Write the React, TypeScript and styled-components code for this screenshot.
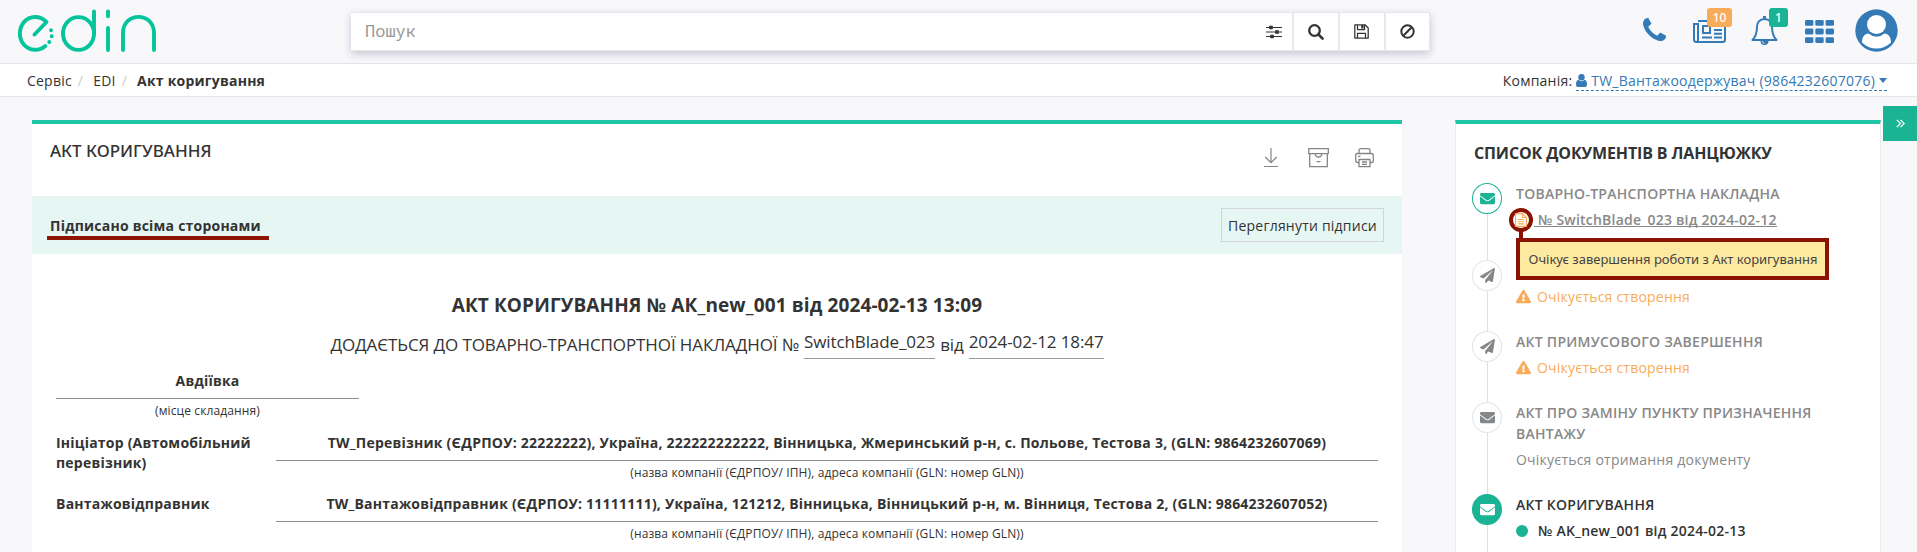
import React from 'react';
import styled, { createGlobalStyle, css } from 'styled-components';
import { FaExclamationTriangle, FaPaperPlane, FaEnvelope } from 'react-icons/fa';

const GlobalStyle = createGlobalStyle`
  * { box-sizing: border-box; }
  body {
    margin: 0;
    background: #f8f8fb;
    color: #333;
    font: 14px/20px "Open Sans", sans-serif;
    letter-spacing: 0.22px;
    overflow: hidden;
  }
  svg { display: block; flex: none; }
`;

const Page = styled.div`
  height: 552px;
  overflow: hidden;
`;

const Header = styled.header`
  height: 64px;
  display: flex;
  align-items: flex-start;
  border-bottom: 1px solid #e4e5e8;
`;

const Logo = styled.svg`
  margin: 8px 0 0 16px;
`;

const SearchBar = styled.div`
  display: flex;
  width: 1079px;
  height: 39px;
  margin: 12px 0 0 191px;
  background: #fff;
  border: 1px solid #e7e8ec;
  border-left-width: 0;
  box-shadow: 0 3px 8px rgba(50, 60, 90, 0.25);
`;

const SearchInput = styled.div`
  flex: 1;
  padding-left: 14px;
  color: #999;
  font: 17px/35px "Noto Sans Mono", "DejaVu Sans Mono", monospace;
  letter-spacing: 0;
`;

const SearchButton = styled.div<{ $width: number }>`
  width: ${(p) => p.$width}px;
  display: flex;
  align-items: center;
  justify-content: center;
  & + & { border-left: 2px solid #e7e8ec; }
`;

const HeaderIcons = styled.div`
  display: flex;
  margin-left: 213px;
  color: #337ab7;
`;

const IconSlot = styled.div<{ $left?: number; $top: number }>`
  position: relative;
  margin: ${(p) => p.$top}px 0 0 ${(p) => p.$left ?? 0}px;
`;

const Badge = styled.span<{ $color: string; $x: number; $y: number; $w: number }>`
  position: absolute;
  left: ${(p) => p.$x}px;
  top: ${(p) => p.$y}px;
  width: ${(p) => p.$w}px;
  height: 19px;
  border-radius: 3px;
  background: ${(p) => p.$color};
  color: #fff;
  font: 500 12px/19px "Noto Sans", sans-serif;
  letter-spacing: 0;
  text-align: center;
`;

const Crumbs = styled.nav`
  height: 33px;
  display: flex;
  justify-content: space-between;
  padding: 7px 30px 0 27px;
  background: #fff;
  border-bottom: 1px solid #e4e5e8;
`;

const Trail = styled.div`
  display: flex;
`;

const Slash = styled.span`
  color: #ccc;
  margin: 0 10px 0 6px;
`;

const Company = styled.div`
  display: flex;
  gap: 4px;
`;

const CompanyLink = styled.span`
  display: flex;
  height: 20px;
  gap: 4px;
  align-items: center;
  color: #337ab7;
  border-bottom: 1px dashed #337ab7;
`;

const Caret = styled.i`
  border: 4px solid transparent;
  border-top: 5px solid #337ab7;
  border-bottom: 0;
`;

const Main = styled.main`
  display: flex;
  align-items: flex-start;
  padding-left: 32px;
`;

const Card = styled.section`
  width: 1370px;
  height: 440px;
  margin-top: 23px;
  background: #fff;
  border-top: 4px solid #1fc5a5;
`;

const CardHead = styled.div`
  height: 72px;
  display: flex;
  justify-content: space-between;
  padding: 17px 28px 0 18px;
`;

const CardTitle = styled.h1`
  margin: 0;
  font: 500 17px/20px "Noto Sans", sans-serif;
  letter-spacing: 0;
`;

const Tools = styled.div`
  display: flex;
  gap: 26px;
  padding-top: 7px;
`;

const SignBand = styled.div`
  height: 58px;
  display: flex;
  justify-content: space-between;
  align-items: flex-start;
  background: #e6f6f3;
  padding: 12px 18px 0 15px;
`;

const Signed = styled.strong`
  width: 222px;
  height: 32px;
  padding: 8px 0 0 3px;
  border-bottom: 4px solid #8f1402;
`;

const OutlineButton = styled.div`
  width: 163px;
  height: 34px;
  border: 1px solid #d2d5d6;
  text-align: center;
  line-height: 34px;
  white-space: nowrap;
`;

const DocTitle = styled.h2`
  margin: 39px 0 0;
  font-size: 19px;
  line-height: 24px;
  font-weight: 700;
  letter-spacing: 0.12px;
  text-align: center;
`;

const DocSub = styled.div`
  display: flex;
  justify-content: center;
  gap: 5px;
  margin-top: 12px;
  height: 30px;
  font-size: 17px;
  line-height: 32px;
  letter-spacing: -0.1px;
`;

const Underlined = styled.span`
  height: 30px;
  line-height: 26px;
  border-bottom: 1px solid #999;
`;

const Field = styled.div`
  border-bottom: 1px solid #8d8d8d;
  height: 28px;
  text-align: center;
  font-weight: 700;
  white-space: nowrap;
`;

const Hint = styled.div`
  padding-top: 2px;
  font-size: 12px;
  letter-spacing: 0.12px;
  text-align: center;
`;

const Place = styled.div`
  width: 303px;
  margin: 12px 0 0 24px;
`;

const Party = styled.div<{ $top: number }>`
  display: flex;
  margin: ${(p) => p.$top}px 24px 0;
  height: 50px;
`;

const PartyName = styled.strong`
  width: 220px;
`;

const PartyData = styled.div`
  flex: 1;
`;

const Chain = styled.aside`
  width: 426px;
  height: 440px;
  margin: 23px 2px 0 53px;
  background: #fff;
  border: 1px solid #e7eaec;
  border-top: 4px solid #1fc5a5;
  padding: 18px 0 0 17px;
`;

const ChainTitle = styled.h3`
  margin: 0 0 29px 1px;
  font-size: 16px;
  line-height: 22px;
  font-weight: 700;
  letter-spacing: -0.13px;
`;

const Step = styled.div<{ $height: number }>`
  position: relative;
  display: flex;
  height: ${(p) => p.$height}px;
`;

const Rail = styled.div`
  width: 30px;
  margin: -10px 14px 0 -1px;
  display: flex;
  flex-direction: column;
  align-items: center;
  &::after {
    content: '';
    flex: 1;
    width: 1px;
    background: #e0e0e0;
  }
`;

const Dot = styled.div<{ $kind: 'grey' | 'green' | 'solid' }>`
  width: 30px;
  height: 31px;
  border-radius: 50%;
  display: flex;
  align-items: center;
  justify-content: center;
  border: 1px solid ${(p) => (p.$kind === 'grey' ? '#e3e4e5' : '#1ab394')};
  background: ${(p) => (p.$kind === 'solid' ? '#1ab394' : '#fff')};
  color: ${(p) => (p.$kind === 'grey' ? '#84888b' : p.$kind === 'solid' ? '#fff' : '#1ab394')};
`;

const StepBody = styled.div<{ $dark?: boolean }>`
  width: 330px;
  margin-top: -10px;
  line-height: 21px;
  color: ${(p) => (p.$dark ? '#333' : '#888')};
`;

const StepTitle = styled.div`
  font-weight: 600;
  min-height: 21px;
  letter-spacing: 0.26px;
`;

const StepNote = styled.div<{ $tone?: 'warn' | 'bold' }>`
  display: flex;
  align-items: center;
  gap: 6px;
  margin-top: 5px;
  font-weight: ${(p) => (p.$tone === 'bold' ? 600 : 400)};
  ${(p) => p.$tone === 'warn' && css`color: #f8ac59;`}
`;

const DocLink = styled.span`
  margin-left: 18px;
  padding-left: 4px;
  height: 18px;
  line-height: 21px;
  margin-bottom: 3px;
  border-bottom: 1px solid #888;
  white-space: nowrap;
`;

const GreenDot = styled.i`
  width: 12px;
  height: 12px;
  margin-right: 4px;
  border-radius: 50%;
  background: #1ab394;
`;

const Ring = styled.div`
  position: absolute;
  left: 36px;
  top: 15px;
  width: 24px;
  height: 24px;
  border-radius: 50%;
  border: 4px solid #8b1200;
  display: flex;
  align-items: center;
  justify-content: center;
  color: #f8ac59;
  &::after {
    content: '';
    position: absolute;
    left: 6px;
    top: 18px;
    width: 4px;
    height: 10px;
    background: #8b1200;
  }
`;

const Tip = styled.div`
  position: absolute;
  z-index: 2;
  left: 43px;
  top: 45px;
  width: 313px;
  height: 42px;
  padding-left: 1px;
  border: 4px solid #8b1200;
  background: #fde9a0;
  color: #444;
  font: 13px/35px "Noto Sans", sans-serif;
  letter-spacing: 0;
  text-align: center;
  white-space: nowrap;
`;

const Toggle = styled.div`
  width: 34px;
  height: 35px;
  margin-top: 9px;
  background: #1ab394;
  display: flex;
  align-items: center;
  justify-content: center;
`;

const LogoMark = () => (
  <Logo width="144" height="48" viewBox="16 8 144 48" fill="none" stroke="#05c49b" strokeWidth="3.9" strokeLinecap="round" strokeLinejoin="round">
    <path d="M34.5 34.5 46.5 22C40 15 29.500 15.500 24 22C18.500 29 18.500 38.500 24 44.800C29.500 51 39 51.500 45.300 46" />
    <ellipse cx="78.500" cy="33.500" rx="15.500" ry="16.400" />
    <path d="M94 11.500V34M108 11.500V16.300M108 28V50M123 50V33C123 11.500 154 11.500 154 33V50" />
    <path d="M51 30.300h.01M51.700 36.300h.01M49.300 42h.01" />
  </Logo>
);

const SlidersIcon = () => (
  <svg width="16" height="14" viewBox="0 0 16 14" stroke="#333" fill="#333">
    <path d="M0 2.500h16M0 7h16M0 11.500h16" strokeWidth="1.200" />
    <path d="M3.500 1h3v3h-3zM9.500 5.500h3v3h-3zM4.500 10h3v3h-3z" strokeWidth=".6" />
  </svg>
);

const SearchIcon = () => (
  <svg width="16" height="16" viewBox="0 0 16 16" fill="none" stroke="#333">
    <circle cx="6.500" cy="6.500" r="5.300" strokeWidth="2.300" />
    <path d="M10.500 10.500 14.600 14.600" strokeWidth="2.600" strokeLinecap="round" />
  </svg>
);

const SaveIcon = () => (
  <svg width="16" height="15" viewBox="0 0 16 15" fill="none" stroke="#333" strokeWidth="1.250" strokeLinejoin="round">
    <path d="M.8.8H11L14.200 4V14.200H.8ZM3.500 14V9.300h8V14M3.500.8v4.700h7V.8" />
    <path d="M7.200 1h2.300v3.500H7.200z" fill="#333" stroke="none" />
  </svg>
);

const BanIcon = () => (
  <svg width="15" height="15" viewBox="0 0 15 15" fill="none" stroke="#333" strokeWidth="2">
    <circle cx="7.500" cy="7.500" r="6.200" />
    <path d="M3.300 11.700 11.700 3.300" />
  </svg>
);

const PhoneIcon = () => (
  <svg width="23" height="23" viewBox="0 128 1408 1408" fill="currentColor">
    <path d="M1408 1240q0 27-10 70.5t-21 68.5q-21 50-122 106-94 51-186 51-27 0-53-3.500t-57.500-12.500-47-14.500-55.500-20.500-49-18q-98-35-175-83-127-79-264-216t-216-264q-48-77-83-175-3-9-18-49t-20.500-55.500-14.500-47-12.500-57.500-3.500-53q0-92 51-186 56-101 106-122 25-11 68.500-21t70.500-10q14 0 21 3 18 6 53 76 11 19 30 54t35 63.500 31 53.500q3 4 17.500 25t21.500 35.500 7 28.500q0 20-28.500 50t-62 55-62 53-28.500 46q0 9 5 22.500t8.500 20.500 14 24 11.500 19q76 137 174 235t235 174q2 1 19 11.500t24 14 20.500 8.500 22.500 5q18 0 46-28.500t53-62 55-62 50-28.500q14 0 28.500 7t35.500 21.500 25 17.500q25 15 53.500 31t63.500 35 54 30q70 35 76 53 3 7 3 21z" />
  </svg>
);

const NewsIcon = () => (
  <svg width="33" height="23" viewBox="0 0 33 23" fill="none" stroke="currentColor" strokeWidth="2">
    <path d="M5 1H32V19.500Q32 22 29.500 22H3.500Q1 22 1 19.500V4H5V19.500Q5 22 3.500 22" />
    <path d="M10 6h7v7h-7zM9 17.500h10M21 6h8M21 10h8M21 13.800h8M21 17.500h8" />
  </svg>
);

const BellIcon = () => (
  <svg width="27" height="29" viewBox="0 0 27 29" fill="none" stroke="currentColor" strokeWidth="2" strokeLinejoin="round">
    <path d="M13.500 3C8.500 3 6 7 6 10.500C6 17 4.500 21 1.500 24H25.500C22.500 21 21 17 21 10.500C21 7 18.500 3 13.500 3Z" />
    <path d="M13.500 0v3" strokeWidth="3" />
    <path d="M9.500 25h8a4 4 0 0 1-8 0z" fill="currentColor" stroke="none" />
    <path d="M11.200 25.200q.3 2 2.300 2.200" stroke="#f8f8fb" strokeWidth=".8" />
  </svg>
);

const GridIcon = () => (
  <svg width="29" height="23" viewBox="0 0 29 23" fill="currentColor">
    {[0, 8.6, 17.2].map((y) => [0, 10.3, 20.6].map((x) => <rect key={`${x}-${y}`} x={x} y={y} width="8.400" height="5.800" rx="1.300" />))}
  </svg>
);

const AvatarIcon = () => (
  <svg width="43" height="43" viewBox="0 0 43 43">
    <circle cx="21.500" cy="21.500" r="21.200" fill="currentColor" />
    <path d="M7 33.500C7 28 9.500 25 13.500 24.500Q21.500 31 29.500 24.500C33.500 25 36 28 36 33.500Q30 39.500 21.500 39.500T7 33.500Z" fill="#fff" />
    <circle cx="21.500" cy="15.500" r="9.500" fill="#fff" />
  </svg>
);

const UserIcon = () => (
  <svg width="11" height="13" viewBox="0 0 11 13" fill="currentColor">
    <circle cx="5.500" cy="3.300" r="3.200" />
    <path d="M2.300 5.800Q5.500 8.500 8.700 5.800C10.500 6.200 11 8.500 11 10.700Q11 13 9 13H2Q0 13 0 10.700C0 8.500.5 6.200 2.300 5.800Z" />
  </svg>
);

const DownloadIcon = () => (
  <svg width="18" height="20" viewBox="0 0 18 20" fill="none" stroke="#858585" strokeWidth="1.200">
    <path d="M7 0V14.500M1.300 9 7 14.700 12.700 9M0 18.500h14" />
  </svg>
);

const ArchiveIcon = () => (
  <svg width="21" height="20" viewBox="0 0 21 20" fill="none" stroke="#858585" strokeWidth="1.300">
    <path d="M.7.700h19.600v5H.7zM1.700 5.700V18.700h17.600V5.700M7.200 5.700Q7.500 9 10.500 9T13.800 5.700M8.500 13.700h4" />
  </svg>
);

const PrinterIcon = () => (
  <svg width="19" height="20" viewBox="0 0 19 20" fill="none" stroke="#858585" strokeWidth="1.300">
    <path d="M4 5.500V2.500Q4 .700 6 .700h7Q15 .700 15 2.500V5.500M4 14.500H2.500Q.700 14.500.700 12.500V7.500Q.700 5.500 2.500 5.500H16.500Q18.300 5.500 18.300 7.500V12.500Q18.300 14.500 16.500 14.500H15M4 11.500H15V18.700H4ZM7 14h5M7 16.300h5M3 8.300h2.500" />
  </svg>
);

const PageIcon = () => (
  <svg width="12" height="14" viewBox="0 0 12 14" fill="none" stroke="currentColor" strokeWidth="1.100">
    <path d="M.6.600H7.500L11.400 4.500V13.400H.6ZM7.500.600V4.500H11.400M3 6.500h6M3 8.700h6M3 10.900h6" />
  </svg>
);

const ChevronsIcon = () => (
  <svg width="9" height="9" viewBox="0 0 9 9" fill="none" stroke="#fff" strokeWidth="1.200">
    <path d="M.8.800 4.500 4.500.8 8.200M4.500.800 8.200 4.500 4.500 8.200" />
  </svg>
);

const parties = [
  {
    name: 'Ініціатор (Автомобільний перевізник)',
    data: 'TW_Перевізник (ЄДРПОУ: 22222222), Україна, 222222222222, Вінницька, Жмеринський р-н, с. Польове, Тестова 3, (GLN: 9864232607069)',
    top: 12,
  },
  {
    name: 'Вантажовідправник',
    data: 'TW_Вантажовідправник (ЄДРПОУ: 11111111), Україна, 121212, Вінницька, Вінницький р-н, м. Вінниця, Тестова 2, (GLN: 9864232607052)',
    top: 11,
  },
];

export default function App() {
  return (
    <Page>
      <GlobalStyle />
      <Header>
        <LogoMark />
        <SearchBar>
          <SearchInput>Пошук</SearchInput>
          <SearchButton $width={37}><SlidersIcon /></SearchButton>
          <SearchButton $width={46}><SearchIcon /></SearchButton>
          <SearchButton $width={46}><SaveIcon /></SearchButton>
          <SearchButton $width={45}><BanIcon /></SearchButton>
        </SearchBar>
        <HeaderIcons>
          <IconSlot $top={18}><PhoneIcon /></IconSlot>
          <IconSlot $top={20} $left={27}>
            <NewsIcon />
            <Badge $color="#f8ac59" $x={14} $y={-12} $w={25}>10</Badge>
          </IconSlot>
          <IconSlot $top={16} $left={25}>
            <BellIcon />
            <Badge $color="#1ab394" $x={18} $y={-8} $w={19}>1</Badge>
          </IconSlot>
          <IconSlot $top={20} $left={27}><GridIcon /></IconSlot>
          <IconSlot $top={9} $left={21}><AvatarIcon /></IconSlot>
        </HeaderIcons>
      </Header>
      <Crumbs>
        <Trail>
          <span>Сервіс</span><Slash>/</Slash>
          <span>EDI</span><Slash>/</Slash>
          <strong>Акт коригування</strong>
        </Trail>
        <Company>
          <span>Компанія:</span>
          <CompanyLink><UserIcon />TW_Вантажоодержувач (9864232607076)<Caret /></CompanyLink>
        </Company>
      </Crumbs>
      <Main>
        <Card>
          <CardHead>
            <CardTitle>АКТ КОРИГУВАННЯ</CardTitle>
            <Tools><DownloadIcon /><ArchiveIcon /><PrinterIcon /></Tools>
          </CardHead>
          <SignBand>
            <Signed>Підписано всіма сторонами</Signed>
            <OutlineButton>Переглянути підписи</OutlineButton>
          </SignBand>
          <DocTitle>АКТ КОРИГУВАННЯ № АК_new_001 від 2024-02-13 13:09</DocTitle>
          <DocSub>
            <span>ДОДАЄТЬСЯ ДО ТОВАРНО-ТРАНСПОРТНОЇ НАКЛАДНОЇ №</span>
            <Underlined>SwitchBlade_023</Underlined>
            <span>від</span>
            <Underlined>2024-02-12 18:47</Underlined>
          </DocSub>
          <Place>
            <Field>Авдіївка</Field>
            <Hint>(місце складання)</Hint>
          </Place>
          {parties.map((p) => (
            <Party key={p.name} $top={p.top}>
              <PartyName>{p.name}</PartyName>
              <PartyData>
                <Field>{p.data}</Field>
                <Hint>(назва компанії (ЄДРПОУ/ ІПН), адреса компанії (GLN: номер GLN))</Hint>
              </PartyData>
            </Party>
          ))}
        </Card>
        <Chain>
          <ChainTitle>СПИСОК ДОКУМЕНТІВ В ЛАНЦЮЖКУ</ChainTitle>
          <Step $height={77}>
            <Rail><Dot $kind="green"><FaEnvelope size={15} /></Dot></Rail>
            <StepBody>
              <StepTitle>ТОВАРНО-ТРАНСПОРТНА НАКЛАДНА</StepTitle>
              <StepNote $tone="bold"><DocLink>№ SwitchBlade_023 від 2024-02-12</DocLink></StepNote>
            </StepBody>
            <Ring><PageIcon /></Ring>
            <Tip>Очікує завершення роботи з Акт коригування</Tip>
          </Step>
          <Step $height={71}>
            <Rail><Dot $kind="grey"><FaPaperPlane size={15} /></Dot></Rail>
            <StepBody>
              <StepTitle />
              <StepNote $tone="warn"><FaExclamationTriangle size={15} />Очікується створення</StepNote>
            </StepBody>
          </Step>
          <Step $height={71}>
            <Rail><Dot $kind="grey"><FaPaperPlane size={15} /></Dot></Rail>
            <StepBody>
              <StepTitle>АКТ ПРИМУСОВОГО ЗАВЕРШЕННЯ</StepTitle>
              <StepNote $tone="warn"><FaExclamationTriangle size={15} />Очікується створення</StepNote>
            </StepBody>
          </Step>
          <Step $height={92}>
            <Rail><Dot $kind="grey"><FaEnvelope size={15} /></Dot></Rail>
            <StepBody>
              <StepTitle>АКТ ПРО ЗАМІНУ ПУНКТУ ПРИЗНАЧЕННЯ ВАНТАЖУ</StepTitle>
              <StepNote>Очікується отримання документу</StepNote>
            </StepBody>
          </Step>
          <Step $height={92}>
            <Rail><Dot $kind="solid"><FaEnvelope size={15} /></Dot></Rail>
            <StepBody $dark>
              <StepTitle>АКТ КОРИГУВАННЯ</StepTitle>
              <StepNote $tone="bold"><GreenDot />№ AK_new_001 від 2024-02-13</StepNote>
            </StepBody>
          </Step>
        </Chain>
        <Toggle><ChevronsIcon /></Toggle>
      </Main>
    </Page>
  );
}
